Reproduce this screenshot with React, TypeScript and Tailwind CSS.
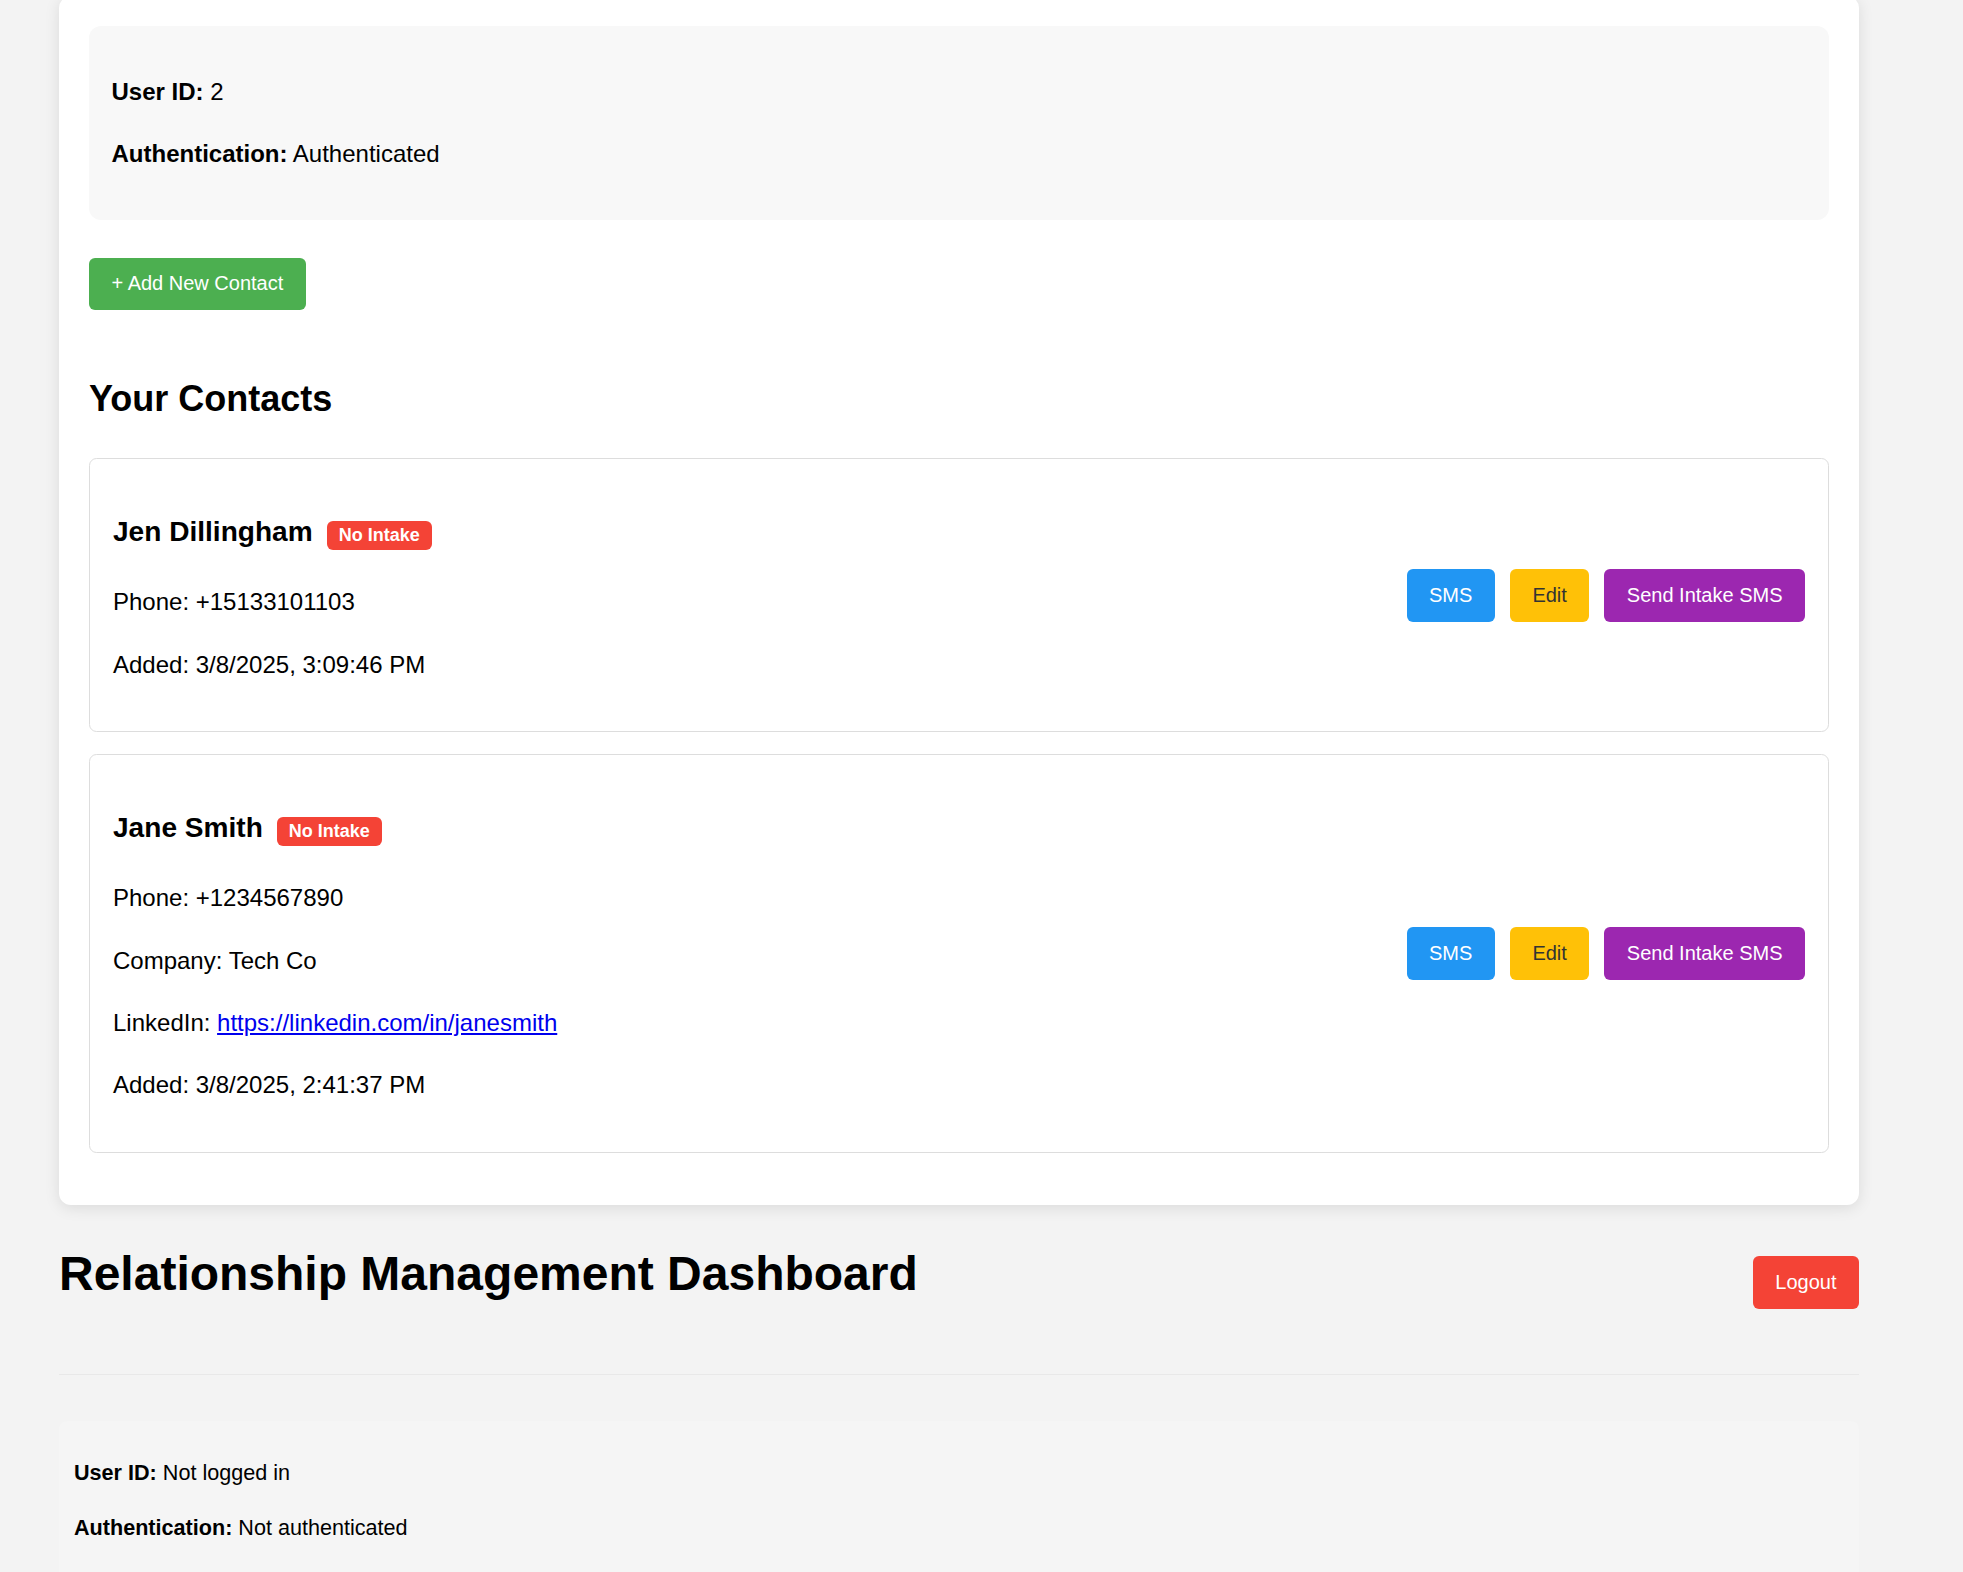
import React from "react";

type Contact = {
  name: string;
  phone: string;
  company?: string;
  linkedin?: string;
  added: string;
};

const contacts: Contact[] = [
  { name: "Jen Dillingham", phone: "+15133101103", added: "3/8/2025, 3:09:46 PM" },
  {
    name: "Jane Smith",
    phone: "+1234567890",
    company: "Tech Co",
    linkedin: "https://linkedin.com/in/janesmith",
    added: "3/8/2025, 2:41:37 PM",
  },
];

function ContactCard({ c }: { c: Contact }) {
  return (
    <div className="flex items-center justify-between border border-[#dddddd] rounded-[7.5px] p-[23px] mb-[22px] bg-white">
      <div>
        <h3 className="text-[28.08px] font-bold leading-[1.6] my-[28.08px]">
          {c.name}
          <span className="inline-block ml-[14px] bg-[#f44336] text-white text-[18px] font-bold leading-[20px] px-[12px] py-[4.5px] rounded-[6px]">
            No Intake
          </span>
        </h3>
        <p className="text-[24px] leading-[1.6] my-[24px]">Phone: {c.phone}</p>
        {c.company && <p className="text-[24px] leading-[1.6] my-[24px]">Company: {c.company}</p>}
        {c.linkedin && (
          <p className="text-[24px] leading-[1.6] my-[24px]">
            LinkedIn:{" "}
            <a href="#" className="text-[#0000ee] underline">
              {c.linkedin}
            </a>
          </p>
        )}
        <p className="text-[24px] leading-[1.6] my-[24px]">Added: {c.added}</p>
      </div>
      <div className="flex gap-[15px]">
        <button className="bg-[#2196f3] text-white text-[20px] leading-[23px] px-[22.5px] py-[15px] rounded-[6px]">
          SMS
        </button>
        <button className="bg-[#ffc107] text-[#333333] text-[20px] leading-[23px] px-[22.5px] py-[15px] rounded-[6px]">
          Edit
        </button>
        <button className="bg-[#9c27b0] text-white text-[20px] leading-[23px] px-[22.5px] py-[15px] rounded-[6px]">
          Send Intake SMS
        </button>
      </div>
    </div>
  );
}

export default function App() {
  return (
    <div className="min-h-screen bg-[#f3f3f3] text-black font-['Liberation_Sans',Arial,sans-serif] leading-[1.6] overflow-hidden">
      <div className="ml-[59px] w-[1800px]">
        <section className="-mt-[4px] bg-white rounded-[12px] shadow-[0_3px_15px_rgba(0,0,0,0.1)] p-[30px]">
          <div className="bg-[#f8f8f8] rounded-[12px] p-[22.5px]">
            <p className="text-[24px] leading-[1.6] my-[24px]">
              <strong className="font-bold">User ID:</strong> 2
            </p>
            <p className="text-[24px] leading-[1.6] my-[24px]">
              <strong className="font-bold">Authentication:</strong> Authenticated
            </p>
          </div>
          <button className="mt-[38px] bg-[#4caf50] text-white text-[20px] leading-[23px] px-[22.5px] py-[14.5px] rounded-[6px]">
            + Add New Contact
          </button>
          <h2 className="text-[36px] font-bold leading-[1.6] mt-[60.5px] mb-[30.5px]">Your Contacts</h2>
          {contacts.map((c) => (
            <ContactCard key={c.name} c={c} />
          ))}
        </section>

        <header className="flex items-start justify-between border-b border-[#e8e8e8] pb-[29px]">
          <h1 className="text-[48px] font-bold leading-[76.8px] mt-[31px] mb-[32px]">
            Relationship Management Dashboard
          </h1>
          <button className="mt-[51px] bg-[#f44336] text-white text-[20px] leading-[23px] px-[22.5px] py-[15px] rounded-[6px]">
            Logout
          </button>
        </header>

        <div className="mt-[46px] bg-[#f5f5f5] rounded-[8px] p-[15px]">
          <p className="text-[21.6px] leading-[1.6] my-[20.5px]">
            <strong className="font-bold">User ID:</strong> Not logged in
          </p>
          <p className="text-[21.6px] leading-[1.6] my-[20.5px]">
            <strong className="font-bold">Authentication:</strong> Not authenticated
          </p>
        </div>
      </div>
    </div>
  );
}
